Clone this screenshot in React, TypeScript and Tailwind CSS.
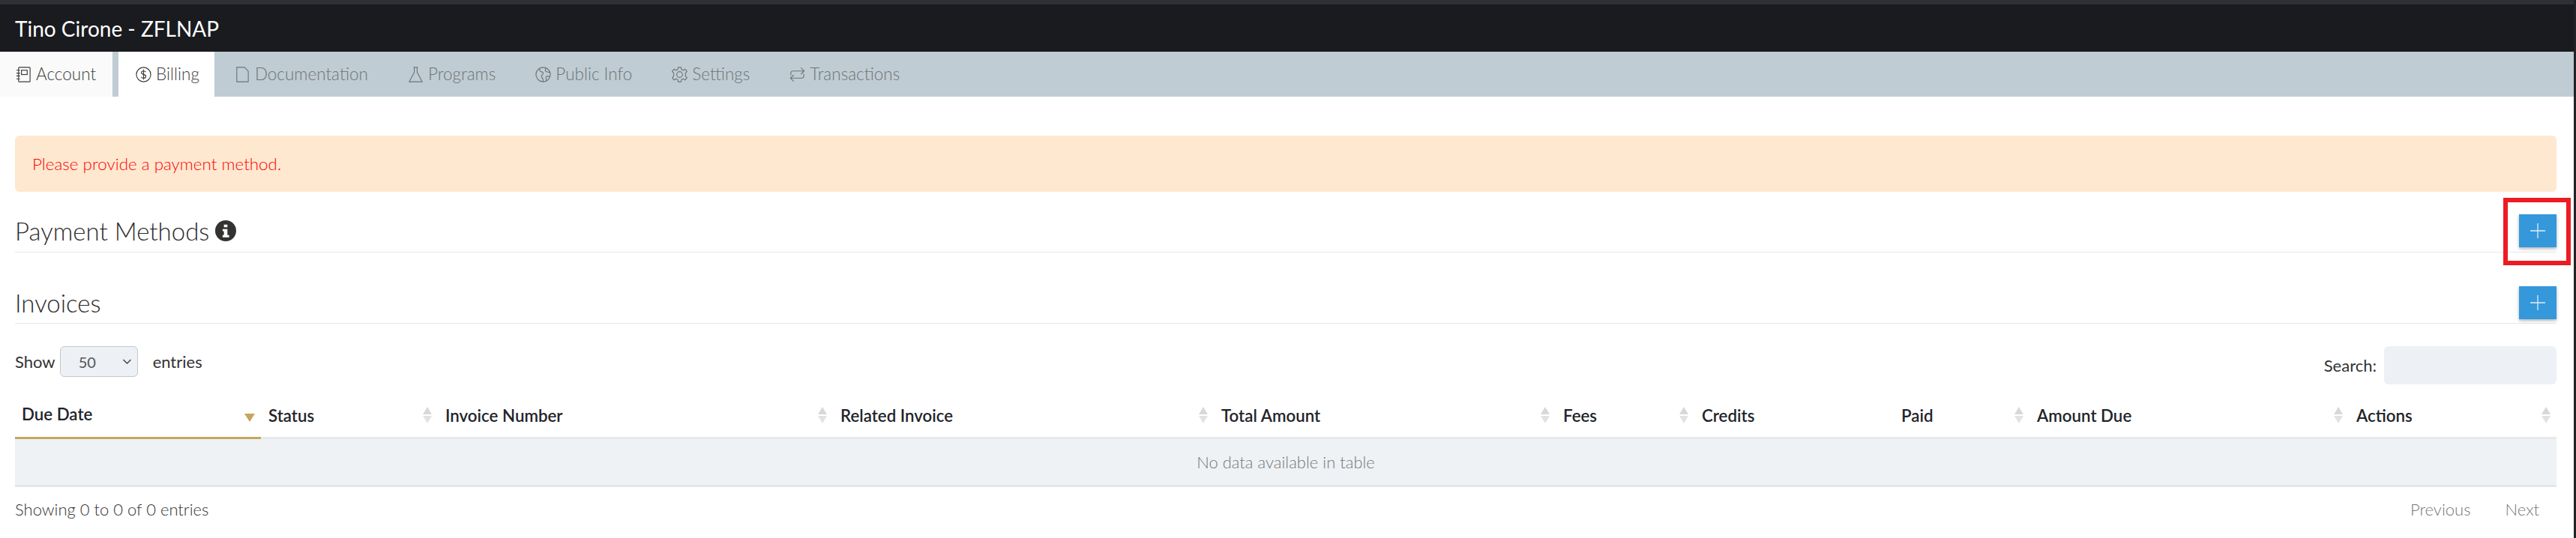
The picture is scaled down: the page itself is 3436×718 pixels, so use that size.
import React from 'react'

const columns = [
  { label: 'Due Date', width: 'w-[328px]' },
  { label: 'Status', width: 'w-[236px]' },
  { label: 'Invoice Number', width: 'w-[527px]' },
  { label: 'Related Invoice', width: 'w-[508px]' },
  { label: 'Total Amount', width: 'w-[456px]' },
  { label: 'Fees', width: 'w-[185px]' },
  { label: 'Credits', width: 'w-[266px]', noSort: true },
  { label: 'Paid', width: 'w-[181px]' },
  { label: 'Amount Due', width: 'w-[426px]' },
  { label: 'Actions', width: 'w-[277px]' },
]

function Icon({ children }: { children: React.ReactNode }) {
  return (
    <svg viewBox="0 0 24 24" fill="none" stroke="currentColor" strokeWidth="1.2" className="w-[23px] h-[23px] shrink-0">
      {children}
    </svg>
  )
}

const tabs: { label: string; active?: boolean; first?: boolean; icon: React.ReactNode }[] = [
  {
    label: 'Account',
    first: true,
    icon: (
      <>
        <rect x="5" y="2" width="16" height="20" rx="1" />
        <rect x="9" y="6" width="8" height="6" />
        <path d="M2 6h5M2 10h5M2 14h5M2 18h5" />
      </>
    ),
  },
  {
    label: 'Billing',
    active: true,
    icon: (
      <>
        <circle cx="12" cy="12" r="10" />
        <path d="M15 8.500c-.6-1-1.700-1.500-3-1.500-1.800 0-3 1-3 2.400 0 3.200 6.200 1.800 6.200 5.100 0 1.500-1.400 2.500-3.200 2.500-1.400 0-2.600-.6-3.200-1.700M12 5v14" />
      </>
    ),
  },
  {
    label: 'Documentation',
    icon: <path d="M4 2h11l5 5.500V22H4z" />,
  },
  {
    label: 'Programs',
    icon: <path d="M9 2h6M10 2v7L3 22h18L14 9V2" />,
  },
  {
    label: 'Public Info',
    icon: (
      <>
        <circle cx="12" cy="12" r="10" />
        <path d="M7 3.500c-.5 3 1 4.500 3.500 5 2 .5 2 2.500.5 3.500-2 1.500-1.500 4 .5 5.500l.5 4.500M16 3c-1.500 2-1.500 4 .5 5 2 .5 3.500 1 5 1M21 15c-2-1-4-1-5 .5-.5 1.500 0 3.500 1 5" />
      </>
    ),
  },
  {
    label: 'Settings',
    icon: (
      <>
        <circle cx="12" cy="12" r="4" />
        <path d="M10 2h4l.7 3 2.300 1 2.700-1.500 2.500 3-2 2.500v4l2 2.500-2.500 3-2.700-1.500-2.300 1-.7 3h-4l-.7-3-2.300-1-2.700 1.500-2.500-3 2-2.500v-4l-2-2.500 2.500-3L7 6l2.300-1z" />
      </>
    ),
  },
  {
    label: 'Transactions',
    icon: (
      <>
        <path d="M3 13V10c0-2 1.500-3 3.500-3H21M17 2.500 21.500 7 17 11.500" />
        <path d="M21 11v3c0 2-1.500 3-3.500 3H3M7 12.500 2.500 17 7 21.500" />
      </>
    ),
  },
]

function SortArrows() {
  return (
    <span className="flex flex-col items-center gap-[2px]">
      <span className="w-0 h-0 border-x-[6px] border-x-transparent border-b-[10px] border-b-[#d8d8d8]" />
      <span className="w-0 h-0 border-x-[6px] border-x-transparent border-t-[10px] border-t-[#e2e2e2]" />
    </span>
  )
}

function AddButton() {
  return (
    <button className="w-[50px] h-[44px] bg-[#3498db] shadow-[0_2px_4px_rgba(0,0,0,0.3)] flex items-center justify-center">
      <svg viewBox="0 0 20 20" stroke="#e3edf5" strokeWidth="1.3" className="w-5 h-5">
        <path d="M10 0v20M0 10h20" />
      </svg>
    </button>
  )
}

export default function App() {
  return (
    <main className="relative h-[718px] bg-white text-[#333] font-['Lato','Open_Sans',sans-serif] overflow-hidden border-r-[3px] border-r-[#222327]">
      {/* Header */}
      <header className="h-[69px] bg-[#1a1b1f] border-t-[6px] border-t-[#2f3035] flex items-center pl-5">
        <h1 className="text-[28px] font-normal text-white">Tino Cirone - ZFLNAP</h1>
      </header>

      {/* Tabs */}
      <nav className="h-[60px] bg-[#bfccd3] flex">
        {tabs.map((tab) => (
          <a
            key={tab.label}
            className={
              tab.active
                ? 'flex items-center gap-[5px] h-full pl-[22px] pr-[20px] ml-2 bg-white text-[#3c3c3c] text-[22.5px] font-light'
                : tab.first
                  ? 'flex items-center gap-[5px] h-full pl-5 pr-[22px] bg-[#fafafa] text-[#3c3c3c] text-[22.5px] font-light'
                  : 'flex items-center gap-[5px] h-full px-[26px] text-[#6f7478] text-[22.5px] font-light'
            }
          >
            <Icon>{tab.icon}</Icon>
            {tab.label}
          </a>
        ))}
      </nav>

      {/* Content */}
      <section className="pl-5 pr-[23px] pt-[52px]">
        <div className="h-[75px] rounded-md bg-[#fee8d0] flex items-center px-[23px] text-[22.4px] font-light text-[#ff0000]">
          Please provide a payment method.
        </div>

        <div className="mt-[30px] h-[51px] border-b border-[#e3e8ee] flex items-start justify-between">
          <h2 className="flex items-center gap-[8px] text-[33px] leading-[44px] font-light text-[#2d2d2d]">
            Payment Methods
            <svg viewBox="0 0 24 24" className="w-[28px] h-[28px]">
              <circle cx="12" cy="12" r="12" fill="#333" />
              <path d="M10 5h4v3h-4zM8.500 10H14v7h2v2.500H8.500V17H10v-4.500H8.500z" fill="#fff" />
            </svg>
          </h2>
          <AddButton />
        </div>

        <div className="mt-[45px] h-[50px] border-b border-[#e3e8ee] flex items-start justify-between">
          <h2 className="text-[33px] leading-[44px] font-light text-[#2d2d2d]">Invoices</h2>
          <AddButton />
        </div>

        <div className="mt-[30px] h-[52px] flex items-start justify-between">
          <div className="flex items-center h-[41px] text-[22px] text-[#333]">
            Show
            <div className="ml-[6px] mr-[20px] w-[104px] h-[41px] rounded-md bg-[#edf0f5] border border-[#c4c7cc] flex items-center justify-between pl-[24px] pr-[7px] text-[20px] text-[#555]">
              50
              <svg viewBox="0 0 12 8" fill="none" stroke="#444" strokeWidth="1.5" className="w-[13px] h-2">
                <path d="M1 1l5 5 5-5" />
              </svg>
            </div>
            entries
          </div>
          <div className="flex items-center text-[22px]">
            Search:
            <div className="ml-[10px] w-[230px] h-[51px] rounded-md bg-[#edf0f5]" />
          </div>
        </div>

        <table className="w-full table-fixed mt-[16px] border-collapse">
          <colgroup>
            {columns.map((col) => (
              <col key={col.label} className={col.width} />
            ))}
          </colgroup>
          <thead>
            <tr>
              {columns.map((col, i) => (
                <th
                  key={col.label}
                  className={
                    i === 0
                      ? 'h-[54px] pl-[9px] pb-[4px] text-left text-[22.3px] font-semibold text-[#22242a] border-b-[3px] border-b-[#c5a65c]'
                      : 'h-[54px] pl-[10px] pb-[4px] text-left text-[22.3px] font-semibold text-[#22242a] border-b-[3px] border-b-[#e6e9ec]'
                  }
                >
                  <div className="flex items-center justify-between pr-2">
                    <span className={i === 0 ? '-mt-1' : ''}>{col.label}</span>
                    {i === 0 ? (
                      <span className="mt-[6px] w-0 h-0 border-x-[7px] border-x-transparent border-t-[11px] border-t-[#c5a65c]" />
                    ) : col.noSort ? null : (
                      <SortArrows />
                    )}
                  </div>
                </th>
              ))}
            </tr>
          </thead>
          <tbody>
            <tr>
              <td colSpan={10} className="h-[64px] bg-[#eef2f5] border-b-[3px] border-b-[#e3e7ea] text-center text-[22px] font-light text-[#777]">
                No data available in table
              </td>
            </tr>
          </tbody>
        </table>

        <div className="mt-[13px] flex items-center justify-between text-[22px] font-light text-[#333]">
          <span>Showing 0 to 0 of 0 entries</span>
          <div className="flex gap-[46px] pr-[23px] text-[#777]">
            <span>Previous</span>
            <span>Next</span>
          </div>
        </div>
      </section>

      {/* Red callout drawn over the page */}
      <div className="absolute left-[3339px] top-[264px] w-[90px] h-[90px] border-[6px] border-[#ec1c24]" />
    </main>
  )
}
